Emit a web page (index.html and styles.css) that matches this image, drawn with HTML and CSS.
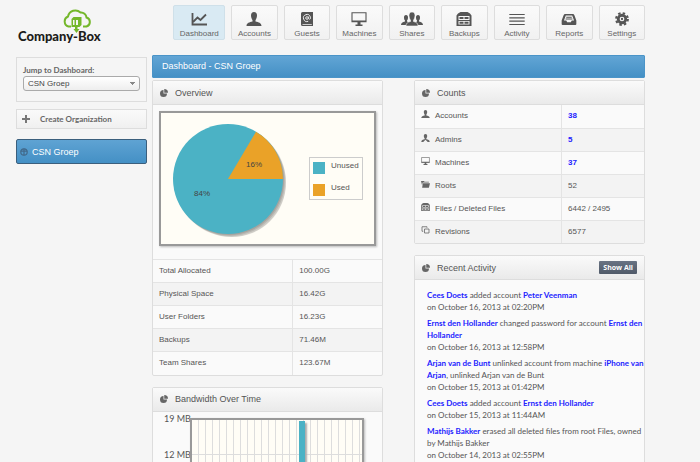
FILE: index.html
```html
<!DOCTYPE html>
<html lang="en">
<head>
<meta charset="utf-8">
<title>Company-Box Dashboard</title>
<link rel="stylesheet" href="styles.css">
</head>
<body>
<svg class="defs" aria-hidden="true">
  <symbol id="i-chart" viewBox="0 0 16 14"><path d="M1.500 1v11.500H16" fill="none" stroke="currentColor" stroke-width="1.800"/><path d="M2 10l4.500-4.500 3 2.500L15 2.500" fill="none" stroke="currentColor" stroke-width="1.800"/></symbol>
  <symbol id="i-user" viewBox="0 0 16 14"><path d="M8 0c2 0 3 1.400 3 3.500S10 7.500 9.500 8v1.500c3 .6 6 1.500 6 4.500H.5c0-3 3-3.900 6-4.500V8C6 7.500 5 5.600 5 3.500S6 0 8 0z"/></symbol>
  <symbol id="i-book" viewBox="0 0 12 14"><path fill-rule="evenodd" d="M1.500 0H12v14H1.500Q0 14 0 12.500v-11Q0 0 1.500 0zM1.500 12v.8H10.800V12z"/><circle cx="6" cy="6" r="3.500" fill="none" stroke="#f5f5f5" stroke-width=".9" stroke-dasharray="18 4" transform="rotate(70 6 6)"/><circle cx="6" cy="6" r="1.300" fill="none" stroke="#f5f5f5" stroke-width=".9"/><path d="M7.600 4.500v2.300q.8 1 1.700 0" fill="none" stroke="#f5f5f5" stroke-width=".8"/></symbol>
  <symbol id="i-monitor" viewBox="0 0 16 14"><path d="M1 .8h14v9H1z" fill="none" stroke="currentColor" stroke-width="1.100"/><path d="M1 8.500h14V10H1zM6.500 10h3v2.500h2V14h-7v-1.500h2z"/></symbol>
  <symbol id="i-group" viewBox="0 0 22 14"><path d="M5 3c1.500 0 2 1 2 2.500S6.500 8 6 8.500v1l2 1V13H0c0-2 1.500-3 4-3.500v-1C3.500 8 3 7 3 5.500S3.500 3 5 3zM17 3c-1.500 0-2 1-2 2.500s.5 2.500 1 3v1l-2 1V13h8c0-2-1.500-3-4-3.500v-1c.5-.5 1-1.500 1-3S18.500 3 17 3z"/><path stroke="#f5f5f5" stroke-width=".6" d="M11 0c2 0 3 1.400 3 3.500S13 7.500 12.500 8v1.500c2.500.6 4.500 1.500 4.500 4.500H5c0-3 2-3.900 4.500-4.500V8C9 7.500 8 5.600 8 3.500S9 0 11 0z"/></symbol>
  <symbol id="i-cabinet" viewBox="0 0 15 14"><path fill-rule="evenodd" d="M4 0h7q3 1 4 3.500V14H0V3.500Q1 1 4 0zM2 4v4h11V4zM2 9v3.500h11V9z"/><path d="M3 5h4v2H3zM8 5h4v2H8zM3 9.800h4v2H3zM8 9.800h4v2H8z"/></symbol>
  <symbol id="i-lines" viewBox="0 0 14 10"><path d="M0 .5h14M0 3.500h14M0 6.500h14M0 9.500h14" stroke="currentColor"/></symbol>
  <symbol id="i-tray" viewBox="0 0 16 12"><path fill-rule="evenodd" d="M4 0h8q1.500 0 2 1.500L16 7v4q0 1-1 1H1q-1 0-1-1V7l2-5.500Q2.500 0 4 0zM4.500 1.500L2.500 7H5l1 2h4l1-2h2.500l-2-5.500z"/><path d="M5 3h6v1H5zM4.300 5h7.400v1H4.300z"/></symbol>
  <symbol id="i-gear" viewBox="-8 -8 16 16"><circle r="4.300" fill="none" stroke="currentColor" stroke-width="3.200"/><circle r="6.700" fill="none" stroke="currentColor" stroke-width="2.400" stroke-dasharray="2.800 2.462"/><circle r="1.300"/></symbol>
  <symbol id="i-pie" viewBox="0 0 16 16"><path d="M7 2v7h7a7 7 0 1 1-7-7z"/><path d="M8.500 0a7.500 7.500 0 0 1 7.500 7.500H8.500z"/></symbol>
  <symbol id="i-admin" viewBox="0 0 16 14"><path d="M8 0c2 0 3 1.400 3 3.500S10 7 9.500 7.500V9c3 .6 6 1.500 6 5H12l-4-4-4 4H.5c0-3.500 3-4.400 6-5V7.500C6 7 5 5.600 5 3.500S6 0 8 0z"/></symbol>
  <symbol id="i-folder" viewBox="0 0 16 13"><path d="M0 1h5l1.500 1.500H14V4H3L2 9z"/><path d="M3.500 5H16l-2 8H2z"/></symbol>
  <symbol id="i-copies" viewBox="0 0 16 16"><path d="M6 6h9v8H6zM3.500 10.500H1V1.500h10v2" fill="none" stroke="currentColor" stroke-width="1.600"/></symbol>
</svg>
<div class="page">
  <header class="top">
    <a class="logo" href="#">
      <svg class="cloud" viewBox="0 0 30 24" aria-hidden="true">
        <path d="M9 17.500H6.500A5.300 5.300 0 0 1 6 7.500 7.500 7.500 0 0 1 18.500 3.500 5.500 5.500 0 0 1 24.500 8.500a4.700 4.700 0 0 1 0 9H21" fill="none" stroke="#74b72b" stroke-width="2"/>
        <path d="M9.500 10l2-2h8v8l-2 2h-2v2h2l-3 4-3-4h1.500v-2H9.500z" fill="#74b72b"/><path d="M11 11h1.500v5H11zM14 11h2v5h-2z" fill="#f5f5f5"/>
      </svg>
      <span class="brand">Company-Box</span>
    </a>
    <nav class="nav">
      <a class="tab active" href="#"><svg class="ti"><use href="#i-chart"/></svg>Dashboard</a>
      <a class="tab" href="#"><svg class="ti"><use href="#i-user"/></svg>Accounts</a>
      <a class="tab" href="#"><svg class="ti"><use href="#i-book"/></svg>Guests</a>
      <a class="tab" href="#"><svg class="ti"><use href="#i-monitor"/></svg>Machines</a>
      <a class="tab" href="#"><svg class="ti"><use href="#i-group"/></svg>Shares</a>
      <a class="tab" href="#"><svg class="ti"><use href="#i-cabinet"/></svg>Backups</a>
      <a class="tab" href="#"><svg class="ti short"><use href="#i-lines"/></svg>Activity</a>
      <a class="tab" href="#"><svg class="ti short"><use href="#i-tray"/></svg>Reports</a>
      <a class="tab" href="#"><svg class="ti"><use href="#i-gear"/></svg>Settings</a>
    </nav>
  </header>
  <div class="body">
    <aside class="side">
      <div class="jump">
        <label for="org">Jump to Dashboard:</label>
        <select id="org"><option>CSN Groep</option></select>
      </div>
      <button class="create" type="button"><svg viewBox="0 0 8 8"><path d="M4 0v8M0 4h8" stroke="#777" stroke-width="2"/></svg>Create Organization</button>
      <a class="org" href="#"><svg viewBox="0 0 10 10"><circle cx="5" cy="5" r="4" fill="none" stroke="currentColor" stroke-width="1.500"/><path d="M5 1v8M1 4h8" stroke="currentColor" stroke-width="1.500"/></svg>CSN Groep</a>
    </aside>
    <main class="main">
      <h1 class="title">Dashboard - CSN Groep</h1>
      <div class="cols">
        <div class="col">
          <section class="panel">
            <h2 class="head"><svg><use href="#i-pie"/></svg>Overview</h2>
            <div class="chart">
              <svg class="pie" viewBox="0 0 112 112" role="img" aria-label="Storage use">
                <g fill="#000" fill-opacity=".1"><circle cx="57" cy="57" r="55"/><circle cx="58" cy="58" r="55"/><circle cx="59" cy="59" r="55"/><circle cx="60" cy="60" r="54"/></g>
                <circle cx="56" cy="56" r="55" fill="#4bb2c5"/>
                <path d="M56 56h55A55 55 0 0 0 84 8.700z" fill="#eaa228"/>
                <text x="82" y="44" text-anchor="middle">16%</text><text x="30" y="73" text-anchor="middle">84%</text>
              </svg>
              <ul class="legend"><li><i class="sw teal"></i>Unused</li><li><i class="sw gold"></i>Used</li></ul>
            </div>
            <table class="data sizes">
              <tr><th>Total Allocated</th><td>100.00G</td></tr>
              <tr><th>Physical Space</th><td>16.42G</td></tr>
              <tr><th>User Folders</th><td>16.23G</td></tr>
              <tr><th>Backups</th><td>71.46M</td></tr>
              <tr><th>Team Shares</th><td>123.67M</td></tr>
            </table>
          </section>
          <section class="panel">
            <h2 class="head"><svg><use href="#i-pie"/></svg>Bandwidth Over Time</h2>
            <div class="band">
              <div class="axis"><span>19 MB</span><span>12 MB</span></div>
              <div class="plot"><div class="bar"></div></div>
            </div>
          </section>
        </div>
        <div class="col">
          <section class="panel">
            <h2 class="head"><svg><use href="#i-pie"/></svg>Counts</h2>
            <table class="data counts">
              <tr><th><svg><use href="#i-user"/></svg>Accounts</th><td><a href="#">38</a></td></tr>
              <tr><th><svg><use href="#i-admin"/></svg>Admins</th><td><a href="#">5</a></td></tr>
              <tr><th><svg><use href="#i-monitor"/></svg>Machines</th><td><a href="#">37</a></td></tr>
              <tr><th><svg><use href="#i-folder"/></svg>Roots</th><td>52</td></tr>
              <tr><th><svg><use href="#i-cabinet"/></svg>Files / Deleted Files</th><td>6442 / 2495</td></tr>
              <tr><th><svg><use href="#i-copies"/></svg>Revisions</th><td>6577</td></tr>
            </table>
          </section>
          <section class="panel">
            <h2 class="head"><svg><use href="#i-pie"/></svg>Recent Activity<button class="all" type="button">Show All</button></h2>
            <div class="feed">
              <p><a href="#">Cees Doets</a> added account <a href="#">Peter Veenman</a><br>on October 16, 2013 at 02:20PM</p>
              <p><a href="#">Ernst den Hollander</a> changed password for account <a href="#">Ernst den Hollander</a><br>on October 16, 2013 at 12:58PM</p>
              <p><a href="#">Arjan van de Bunt</a> unlinked account from machine <a href="#">iPhone van Arjan</a>, unlinked Arjan van de Bunt<br>on October 15, 2013 at 01:42PM</p>
              <p><a href="#">Cees Doets</a> added account <a href="#">Ernst den Hollander</a><br>on October 15, 2013 at 11:44AM</p>
              <p><a href="#">Mathijs Bakker</a> erased all deleted files from root Files, owned by Mathijs Bakker<br>on October 14, 2013 at 02:55PM</p>
            </div>
          </section>
        </div>
      </div>
    </main>
  </div>
</div>
</body>
</html>
```
FILE: styles.css
```css
* { box-sizing: border-box; }
body { margin: 0; height: 100vh; overflow: hidden; background: #f5f5f5; color: #555; font: 8px/12px "Liberation Sans", Arial, sans-serif; }
a { color: inherit; text-decoration: none; }
svg { fill: currentColor; flex: none; }
.defs { display: none; }
.page { padding: 5px 55px 0 16px; }
.top { display: flex; justify-content: space-between; height: 50px; }
.logo { display: flex; flex-direction: column; padding: 4px 0 0 2px; color: #1d1d1b; }
.cloud { width: 30px; height: 24px; margin-left: 44px; }
.brand { font: 900 13px/14px Lato, sans-serif; margin-top: -4px; }
.nav { display: flex; gap: 6px; align-items: flex-start; width: 75%; }
.tab { display: flex; flex: 1 1 0; flex-direction: column; align-items: center; height: 35px; padding-top: 6px; border: 1px solid #ddd; border-radius: 2px; background: linear-gradient(#fafafa, #f1f1f1); color: #666; line-height: 11px; }
.tab.active { flex: 0 0 52px; background: #d9eaf3; border-color: #cfe0e9; }
.ti { width: 22px; height: 14px; color: #555; margin-bottom: 2px; }
.short { height: 11px; margin: 2px 0 3px; }
.body { display: grid; grid-template-columns: 131px 1fr; gap: 5px; }
.jump, .create, .panel { border: 1px solid #ddd; }
.jump { height: 45px; margin-top: 2px; padding: 6px; }
.jump label { display: block; font: bold 8px/12px Lato, sans-serif; color: #666; }
.jump select { appearance: none; display: block; width: 100%; height: 15px; padding: 0 4px; border: 1px solid #aaa; border-radius: 3px; color: #444; font: 8px/12px "Liberation Sans", sans-serif; background: conic-gradient(from -45deg at 50% 100%, #888 90deg, transparent 0) no-repeat right 4px center / 5px 3px, linear-gradient(#fff, #eee); }
.create { display: flex; align-items: center; width: 100%; height: 20px; margin-top: 7px; padding: 0 5px; gap: 10px; background: linear-gradient(#fafafa, #f0f0f0); color: #666; font: bold 8px/12px Lato, sans-serif; }
.create svg { width: 8px; height: 8px; }
.org { display: flex; align-items: center; gap: 4px; height: 25px; margin-top: 10px; padding: 0 3px; border: 1px solid #3b5f7d; border-radius: 2px; background: linear-gradient(#5fa3d3, #4490c5); color: #fff; font-size: 9px; }
.org svg { width: 8px; height: 8px; color: #42698a; }
.title { margin: 0 0 2px; height: 23px; padding: 0 9px; border: 1px solid #4a94c8; border-radius: 1px; background: linear-gradient(#62a5d5, #4490c5); color: #fff; font: 9px/21px "Liberation Sans", sans-serif; }
.cols { display: grid; grid-template-columns: 1fr 1fr; gap: 31px; }
.panel { background: #fafafa; margin-bottom: 11px; border-radius: 2px; }
.head { display: flex; align-items: center; gap: 7px; height: 24px; margin: 0; padding: 0 7px; border-bottom: 1px solid #ddd; background: linear-gradient(#fafafa, #eaeaea); color: #555; font: 9px/12px "Liberation Sans", sans-serif; }
.head svg { width: 8px; height: 8px; color: #666; }
.all { margin-left: auto; height: 13px; padding: 0 4px; border: 0; border-radius: 1px; background: linear-gradient(#697383, #505a69); color: #fff; font: bold 7px/12px "Open Sans", sans-serif; }
.chart { display: flex; justify-content: space-between; align-items: center; height: 135px; margin: 6px 6px 13px; padding: 0 11px; border: 2px solid #999; background: #fffdf6; box-shadow: 1px 1px 2px #bbb; }
.pie { width: 112px; height: 112px; overflow: visible; }
.pie text { font-size: 8px; fill: #444; }
.legend { list-style: none; margin: 0; padding: 3px; width: 54px; height: 43px; border: 1px solid #ccc; }
.legend li { display: flex; gap: 6px; height: 22px; line-height: 10px; }
.sw { width: 12px; height: 12px; margin-top: 1px; }
.teal { background: #4bb2c5; }
.gold { background: #eaa228; }
.data { width: 100%; border-collapse: collapse; table-layout: fixed; }
.data tr { height: 23px; }
.data tr:nth-child(even) { background: #f3f3f3; }
.data th, .data td { padding: 0 6px; border-top: 1px solid #e4e4e4; text-align: left; font-weight: normal; }
.data td { border-left: 1px solid #e4e4e4; }
.sizes th { width: 61%; }
.counts th { width: 64%; }
.counts tr:first-child > * { border-top: 0; }
.counts svg { width: 9px; height: 8px; margin-right: 5px; color: #666; }
.data a, .feed a { color: #22f; font-weight: bold; }
.feed { padding: 9px 0 0 12px; font: 8px/12px Lato, sans-serif; }
.feed p { margin: 0 0 4px; }
.band { display: flex; height: 80px; padding: 6px 18px 0 11px; }
.axis { display: flex; flex-direction: column; width: 26px; gap: 24px; font: 9px/12px Lato, sans-serif; color: #555; margin-top: -5px; white-space: nowrap; }
.plot { flex: 1; border: 2px solid #999; border-bottom: 0; box-shadow: 1px 1px 2px #bbb; background: repeating-linear-gradient(#0000 0 34px, #ddd 34px 35px), repeating-linear-gradient(90deg, #0000 0 6px, #ddd 6px 7px) #fffdf6; }
.bar { width: 6px; height: calc(100% - 1px); margin: 1px 0 0 107px; background: #4bb2c5; box-shadow: 2px 2px 2px #aaa; }
```
